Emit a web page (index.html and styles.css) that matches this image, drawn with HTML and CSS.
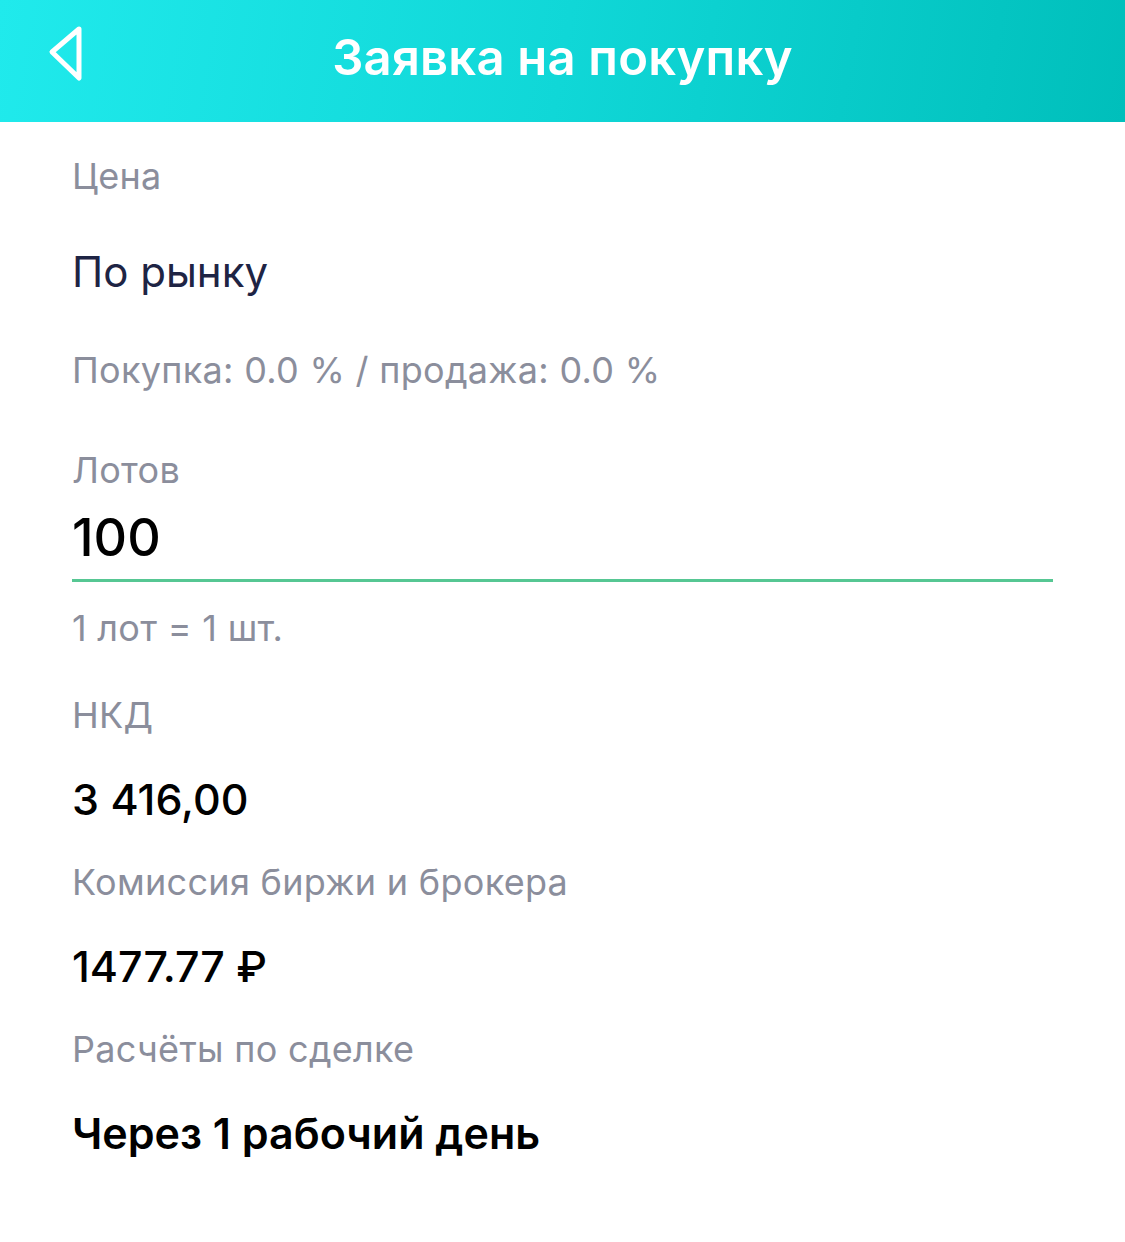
FILE: index.html
```html
<!DOCTYPE html>
<html lang="ru">
<head>
    <meta charset="UTF-8">
    <title>Заявка на покупку</title>
    <link rel="stylesheet" href="styles.css">
</head>
<body>
    <div class="header">
        <button class="back" aria-label="Назад">
            <svg width="40" height="60" viewBox="0 0 40 60">
                <path d="M33 5 L6 28 L33 54 Z" fill="none" stroke="#fff" stroke-width="5" stroke-linejoin="round"/>
            </svg>
        </button>
        <div class="title">Заявка на покупку</div>
    </div>
    <div class="form">
        <div class="label first">Цена</div>
        <div class="value price">По рынку</div>
        <div class="label hint">Покупка: 0.0 % / продажа: 0.0 %</div>

        <div class="label lots-label">Лотов</div>
        <div class="input">100</div>
        <div class="label note">1 лот = 1 шт.</div>

        <div class="label gap">НКД</div>
        <div class="value">3 416,00</div>

        <div class="label">Комиссия биржи и брокера</div>
        <div class="value">1477.77 ₽</div>

        <div class="label">Расчёты по сделке</div>
        <div class="value strong">Через 1 рабочий день</div>
    </div>
</body>
</html>
```

FILE: styles.css
```css
body {
    margin: 0;
    font-family: Inter, "Noto Sans", sans-serif;
    background: #fff;
}
.header {
    height: 122px;
    box-sizing: border-box;
    padding-bottom: 8px;
    display: flex;
    align-items: center;
    justify-content: center;
    position: relative;
    background: linear-gradient(100deg, #20eaec 0%, #10d7d7 50%, #00bfbb 100%);
}
.back {
    position: absolute;
    left: 46px;
    top: 24px;
    padding: 0;
    border: 0;
    background: none;
}
.back svg {
    display: block;
}
.title {
    color: #fff;
    font-size: 49px;
    font-weight: 600;
    letter-spacing: 0.2px;
}
.form {
    padding: 34px 72px 0;
}
.label {
    font-size: 36px;
    line-height: 40px;
    color: #8b8e9c;
    letter-spacing: 0.3px;
    margin-top: 39px;
}
.label.first {
    margin-top: 0;
}
.value {
    font-size: 43px;
    line-height: 48px;
    font-weight: 500;
    color: #000;
    margin-top: 40px;
}
.value.price {
    font-weight: 400;
    color: #1e2444;
    font-size: 42px;
    margin-top: 52px;
}
.label.hint {
    margin-top: 54px;
}
.label.lots-label {
    margin-top: 60px;
}
.input {
    font-size: 52px;
    line-height: 56px;
    font-weight: 500;
    color: #000;
    margin-top: 20px;
    padding-bottom: 13px;
    border-bottom: 3px solid #56c793;
}
.label.note {
    margin-top: 26px;
}
.label.gap {
    margin-top: 47px;
}
.value.strong {
    font-weight: 600;
}
```
